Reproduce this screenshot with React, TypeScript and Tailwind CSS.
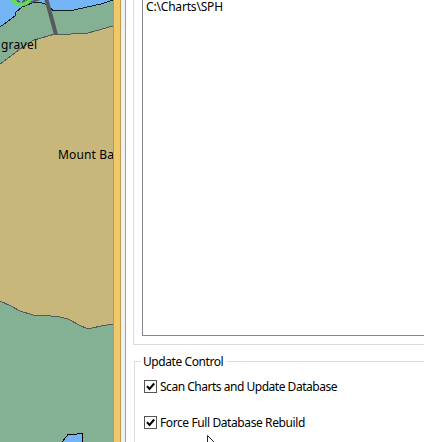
import React from "react";

const outline = { fill: "none", stroke: "#101c20", strokeWidth: 1, shapeRendering: "crispEdges" as const };

function ChartMap() {
  return (
    <svg width="113" height="442" viewBox="0 0 113 442" className="block shrink-0" aria-label="Chart">
      <rect width="113" height="442" fill="#84b094" />
      <path d="M0 0H113V1L101 5L87 7L72 10.500H53L47 5L40 2L32 3L22 8L15 13V16L0 27Z" fill="#73b5f5" />
      <path d="M0 27L15 16V13L22 7L32 3L40 2L47 5L53 10.500H72L87 7L101 4L113 0" {...outline} />
      <path d="M0 64L7 59L24 46L34 40L55 34H71L74 33H88L113 26V324L101 326L92 328H86L81 326L68 319L60 317L51 316L43 315H33L20 311L11 306L0 301Z" fill="#c8b77b" />
      <g {...outline} stroke="#555b5c">
        <path d="M0 64L7 59L24 46L34 40L55 34H71L74 33H88L113 26" />
        <path d="M0 301L11 306L20 311L33 315H43L51 316L60 317L68 319L81 326L86 328H92L101 326L113 324" />
      </g>
      <path d="M46 -2L56 34.500" stroke="#555b5c" strokeWidth="4" />
      <path d="M26 0L32 2L40 -1" stroke="#555b5c" strokeWidth="2" fill="none" />
      <path d="M17 0L20 3M25 0L22 3" stroke="#555b5c" strokeWidth="2" />
      <circle cx="21" cy="-6" r="10.500" fill="none" stroke="#62df49" strokeWidth="3.500" />
      <path d="M62 442L66 437L68 434.500H76L78 433.500H82V436L83 442" fill="#73b5f5" stroke="#000" shapeRendering="crispEdges" />
      <g fill="#000" className="font-['Noto_Sans',sans-serif] text-[12px]">
        <text x="1" y="49" textLength="36">gravel</text>
        <text x="58" y="159" textLength="56">Mount Ba</text>
      </g>
    </svg>
  );
}

function CheckRow({ children, className }: { children: React.ReactNode; className: string }) {
  return (
    <label className="flex h-[13px] items-center">
      <svg width="13" height="13" viewBox="0 0 13 13" className="mr-[3px] shrink-0" role="img" aria-label="checked">
        <rect x=".5" y=".5" width="12" height="12" fill="#fff" stroke="#555" />
        <path d="M3 6.200L5.500 9L10.200 3.500" fill="none" stroke="#000" strokeWidth="2" />
      </svg>
      <span className={`whitespace-nowrap leading-[16px] ${className}`}>{children}</span>
    </label>
  );
}

export default function App() {
  return (
    <div className="relative flex h-[442px] w-[424px] overflow-hidden bg-white font-['Noto_Sans',sans-serif] text-[12px] text-black">
      <ChartMap />
      <div className="w-2 shrink-0 border-x border-[#b99b50] bg-[#f0c869]" />
      <div className="w-[5px] shrink-0 border-r border-[#a0a0a0] bg-[#f0f0f0]" />
      <main className="flex min-w-0 flex-1 flex-col pl-[7px]">
        <section className="h-[345px] shrink-0 border-b border-l border-[#dcdcdc] pl-2">
          <div className="h-[336px] border-b border-l border-[#828790] pl-[3px]">
            <div className="h-[14px] whitespace-nowrap leading-[14px] tracking-[-0.18px]">C:\Charts\SPH</div>
          </div>
        </section>
        <section className="ml-px mt-[9px] flex flex-1 flex-col border-l border-transparent">
          <div className="-ml-px flex h-4 items-center">
            <span className="mt-px h-[9px] w-[7px] shrink-0 self-end border-l border-t border-[#dcdcdc]" />
            <h2 className="w-[85px] shrink-0 whitespace-nowrap pl-[2px] tracking-[-0.42px]">Update Control</h2>
            <span className="-mt-px h-px flex-1 bg-[#dcdcdc]" />
          </div>
          <div className="-ml-px flex flex-1 flex-col gap-[23px] border-l border-[#dcdcdc] pl-[9px] pt-[10px]">
            <CheckRow className="tracking-[-0.48px]">Scan Charts and Update Database</CheckRow>
            <CheckRow className="tracking-[-0.4px]">Force Full Database Rebuild</CheckRow>
          </div>
        </section>
      </main>
      <svg className="absolute left-[207px] top-[435px]" width="9" height="7" viewBox="0 0 9 7" aria-hidden="true">
        <path d="M.5 8V.5L8 8" fill="#fff" stroke="#222436" />
      </svg>
    </div>
  );
}
